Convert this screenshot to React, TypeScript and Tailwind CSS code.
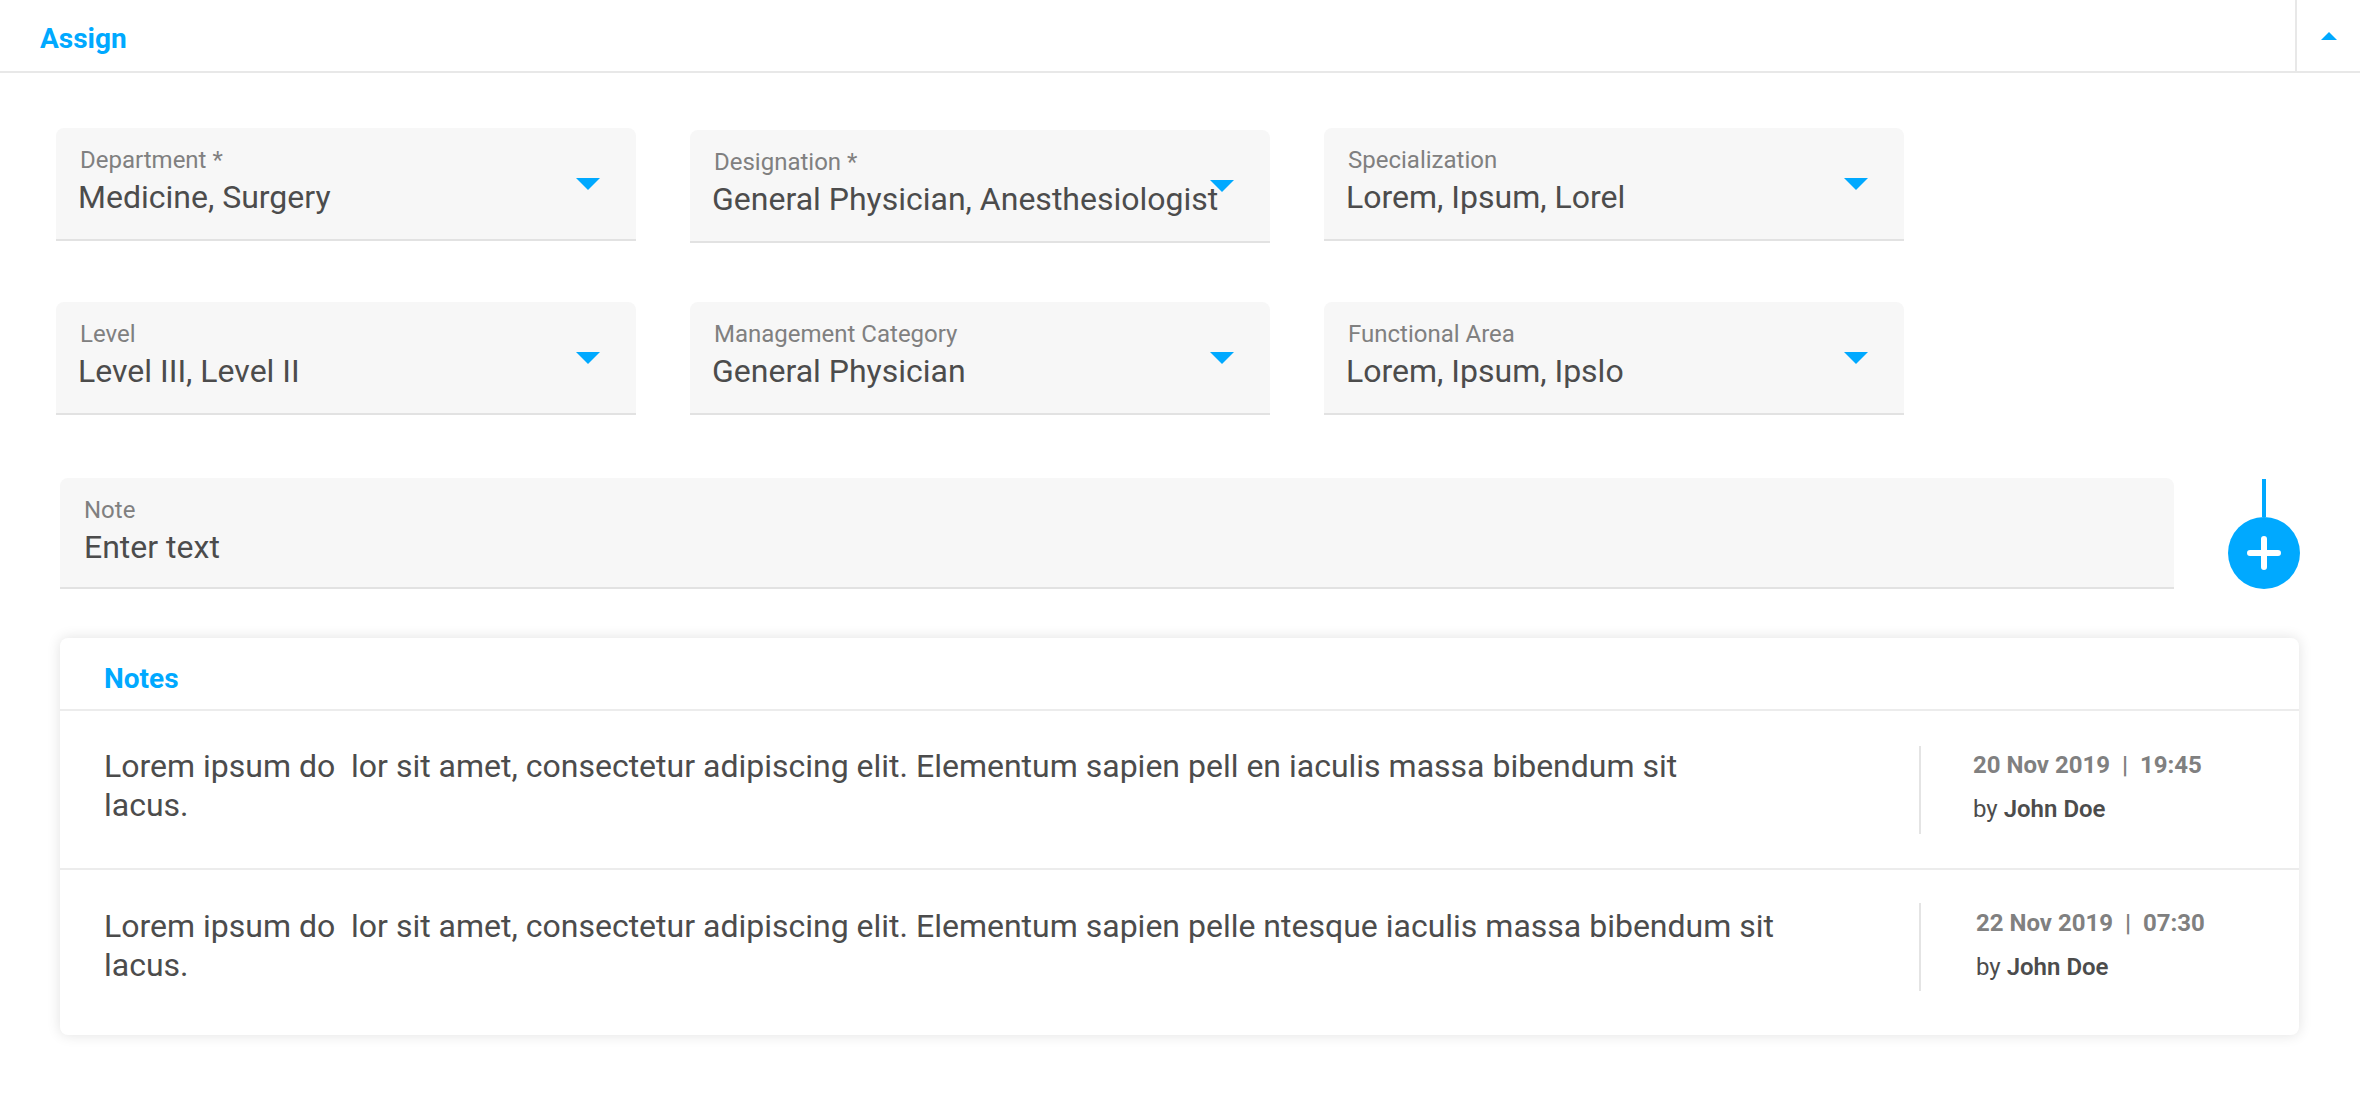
import React from "react";

const rows = [
  [
    { label: "Department *", value: "Medicine, Surgery", cls: "" },
    { label: "Designation *", value: "General Physician, Anesthesiologist", cls: "mt-[2px]" },
    { label: "Specialization", value: "Lorem, Ipsum, Lorel", cls: "" },
  ],
  [
    { label: "Level", value: "Level III, Level II", cls: "" },
    { label: "Management Category", value: "General Physician", cls: "" },
    { label: "Functional Area", value: "Lorem, Ipsum, Ipslo", cls: "" },
  ],
];

const notes = [
  {
    text: "Lorem ipsum do  lor sit amet, consectetur adipiscing elit. Elementum sapien pell en iaculis massa bibendum sit lacus.",
    width: "w-[1600px]",
    date: "20 Nov 2019",
    time: "19:45",
    rowCls: "h-[159px] pt-[35px] border-b-2 border-[#ececec]",
    textCls: "pt-px",
    sideCls: "pl-[52px] pt-[4px]",
  },
  {
    text: "Lorem ipsum do  lor sit amet, consectetur adipiscing elit. Elementum sapien pelle ntesque iaculis massa bibendum sit lacus.",
    width: "w-[1700px]",
    date: "22 Nov 2019",
    time: "07:30",
    rowCls: "h-[165px] pt-[33px]",
    textCls: "pt-[4px]",
    sideCls: "pl-[55px] pt-[5px]",
  },
];

const Field = ({ label, value, cls }: { label: string; value: string; cls: string }) => (
  <div className={`relative w-[580px] h-[113px] bg-[#f7f7f7] rounded-t-[8px] border-b-2 border-[#e2e2e2] pl-[22px] pt-[18px] ${cls}`}>
    <div className="pl-[2px] text-[24px] leading-[28px] text-[#808080]">{label}</div>
    <div className="mt-1 text-[32px] leading-[38px] text-[#4c4c4c] whitespace-nowrap">{value}</div>
    <div className="absolute right-[36px] top-[50px] w-0 h-0 border-x-[12px] border-x-transparent border-t-[12px] border-t-[#00a9ff]" />
  </div>
);

export default function App() {
  return (
    <div className="min-h-[1096px] bg-white font-['Roboto',sans-serif]">
      <div className="flex h-[73px] border-b-2 border-[#e8e8e8]">
        <div className="flex-1 pl-10 pt-[21px] text-[28px] leading-[36px] font-bold text-[#00a9ff]">Assign</div>
        <div className="w-[65px] border-l-2 border-[#e8e8e8] flex justify-center pt-[32px]">
          <div className="w-0 h-0 border-x-[8px] border-x-transparent border-b-[8px] border-b-[#00a9ff]" />
        </div>
      </div>

      <div className="pl-14 pt-[55px] flex flex-col gap-[59px]">
        {rows.map((row, i) => (
          <div key={i} className="flex items-start gap-[54px]">
            {row.map((f) => (
              <Field key={f.label} {...f} />
            ))}
          </div>
        ))}
      </div>

      <div className="ml-[60px] w-[2240px] mt-[63px] flex gap-[54px]">
        <div className="w-[2114px] h-[111px] bg-[#f7f7f7] rounded-t-[8px] border-b-2 border-[#e2e2e2] pl-[24px] pt-[18px]">
          <div className="text-[24px] leading-[28px] text-[#808080]">Note</div>
          <div className="mt-1 text-[32px] leading-[38px] text-[#4c4c4c]">Enter text</div>
        </div>
        <div className="flex flex-col items-center w-[72px] pt-px">
          <div className="w-1 h-[38px] bg-[#00a9ff]" />
          <div className="w-[72px] h-[72px] rounded-full bg-[#00a9ff] flex items-center justify-center">
            <svg width="34" height="34" viewBox="0 0 34 34" fill="none" stroke="#ffffff" strokeWidth="6" strokeLinecap="round">
              <path d="M17 3v28M3 17h28" />
            </svg>
          </div>
        </div>
      </div>

      <div className="ml-[60px] w-[2239px] mt-[49px] rounded-[8px] bg-white shadow-[0_0_14px_rgba(0,0,0,0.12)]">
        <div className="h-[73px] border-b-2 border-[#ececec] pl-[44px] pt-[23px] text-[28px] leading-[36px] font-bold text-[#00a9ff]">Notes</div>
        {notes.map((n) => (
          <div key={n.date} className={`flex ${n.rowCls}`}>
            <div className={`flex-1 pl-[44px] ${n.textCls}`}>
              <p className={`${n.width} text-[32px] leading-[39px] text-[#4c4c4c] whitespace-pre-wrap`}>{n.text}</p>
            </div>
            <div className={`w-[380px] h-[88px] border-l-2 border-[#e4e4e4] ${n.sideCls}`}>
              <div className="text-[24px] leading-[30px] font-bold text-[#808080] whitespace-pre">
                {n.date}  |  {n.time}
              </div>
              <div className="mt-[14px] text-[24px] leading-[30px] text-[#4c4c4c]">
                by <span className="font-semibold">John Doe</span>
              </div>
            </div>
          </div>
        ))}
      </div>
    </div>
  );
}
